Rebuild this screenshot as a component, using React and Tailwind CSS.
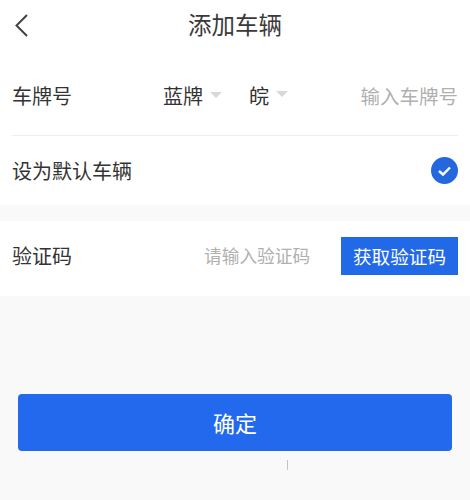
export default function App() {
  return (
    <div className="relative w-[470px] h-[500px] bg-[#f9f9fa] overflow-hidden font-['Noto_Sans_CJK_SC',sans-serif] text-[#333333]">
      <div className="bg-white">
        <div className="h-[54px] flex items-center justify-center relative pb-[5px]">
          <svg className="absolute left-[14px] top-[13px]" width="16" height="26" viewBox="0 0 16 26" fill="none">
            <path d="M13 2 L2.5 12.5 L13 23" stroke="#444" strokeWidth="2" />
          </svg>
          <span className="text-[23.5px] leading-none text-[#3a3a3a]">添加车辆</span>
        </div>
        <div className="mx-3 h-[82px] pt-[3px] flex items-center border-b border-[#eeeeee]">
          <span className="text-[20px] leading-none w-[151px]">车牌号</span>
          <span className="text-[20px] leading-none">蓝牌</span>
          <span className="ml-[7px] mb-[3px] w-0 h-0 border-x-[6px] border-x-transparent border-t-[6px] border-t-[#d8d8d8]"></span>
          <span className="ml-[27px] text-[20px] leading-none">皖</span>
          <span className="ml-[7px] mb-[5px] w-0 h-0 border-x-[6px] border-x-transparent border-t-[6px] border-t-[#d8d8d8]"></span>
          <span className="ml-auto text-[19.5px] leading-none text-[#b0b0b0]">输入车牌号</span>
        </div>
        <div className="mx-3 h-[69px] flex items-center justify-between">
          <span className="text-[20px] leading-none">设为默认车辆</span>
          <svg width="27" height="27" viewBox="0 0 27 27">
            <circle cx="13.5" cy="13.5" r="13.5" fill="#2468e0" />
            <path d="M8 14 L12 17.5 L19 10.5" stroke="#fff" strokeWidth="2.4" fill="none" />
          </svg>
        </div>
      </div>
      <div className="mt-[16px] bg-white h-[75px] px-3 pb-[5px] flex items-center">
        <span className="text-[20px] leading-none w-[192px]">验证码</span>
        <span className="text-[17.7px] leading-none text-[#b0b0b0]">请输入验证码</span>
        <button className="ml-auto w-[117px] h-[38px] bg-[#2269e8] text-white text-[18.6px] leading-none">获取验证码</button>
      </div>
      <div className="mt-[98px] px-[18px]">
        <button className="w-[434px] h-[57px] pb-[2px] rounded-[4px] bg-[#2269ee] text-white text-[22px] leading-none">确定</button>
      </div>
      <div className="absolute left-[287px] top-[460px] w-[1px] h-[10px] bg-[#c4c4c4]"></div>
    </div>
  );
}
